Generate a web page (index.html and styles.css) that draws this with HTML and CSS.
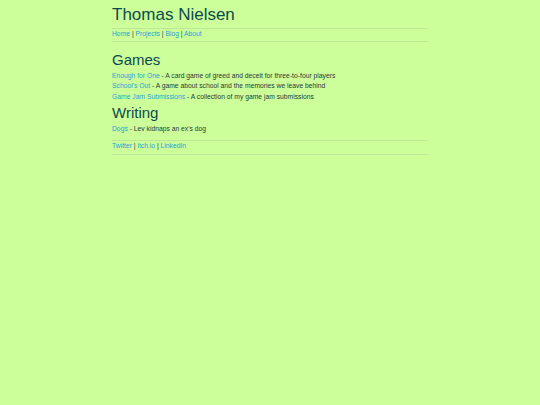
FILE: index.html
```html
<!DOCTYPE html>
<html>
<head>
<meta charset="utf-8">
<title>Thomas Nielsen</title>
<link rel="stylesheet" href="styles.css">
</head>
<body>
<div class="page">
  <h1 class="title">Thomas Nielsen</h1>
  <hr class="rule rule-top">
  <nav class="nav"><a href="#">Home</a> | <a href="#">Projects</a> | <a href="#">Blog</a> | <a href="#">About</a></nav>
  <hr class="rule">
  <h2 class="section section-first">Games</h2>
  <ul class="list">
    <li><a href="#">Enough for One</a> - A card game of greed and deceit for three-to-four players</li>
    <li><a href="#">School's Out</a> - A game about school and the memories we leave behind</li>
    <li><a href="#">Game Jam Submissions</a> - A collection of my game jam submissions</li>
  </ul>
  <h2 class="section">Writing</h2>
  <ul class="list">
    <li><a href="#">Dogs</a> - Lev kidnaps an ex's dog</li>
  </ul>
  <hr class="rule rule-foot">
  <nav class="nav"><a href="#">Twitter</a> | <a href="#">itch.io</a> | <a href="#">LinkedIn</a></nav>
  <hr class="rule">
</div>
</body>
</html>
```
FILE: styles.css
```css
html, body {
  margin: 0;
  padding: 0;
  background: #ccff99;
}
body {
  font-family: "Liberation Sans", Arial, sans-serif;
  font-size: 6.75px;
  color: #1f3b3b;
}
.page {
  width: 316px;
  margin: 0 auto;
  padding-top: 5px;
}
.title {
  font-size: 17px;
  font-weight: normal;
  color: #0d4a4f;
  margin: 0;
  line-height: 19px;
}
.rule {
  border: 0;
  border-top: 1px solid #bde89a;
  margin: 0;
  height: 0;
}
.rule-top {
  margin-top: 3.5px;
}
.rule-foot {
  margin-top: 5.5px;
}
.nav {
  line-height: 10.3px;
  padding-bottom: 2.5px;
}
.section {
  font-size: 15px;
  font-weight: normal;
  color: #0d4a4f;
  margin: 2px 0 3.5px;
  line-height: 17px;
}
.section-first {
  margin-top: 8.3px;
}
.list {
  list-style: none;
  margin: 0;
  padding: 0;
}
.list li {
  line-height: 10.3px;
}
a {
  color: #2a9fd6;
  text-decoration: none;
}
```
